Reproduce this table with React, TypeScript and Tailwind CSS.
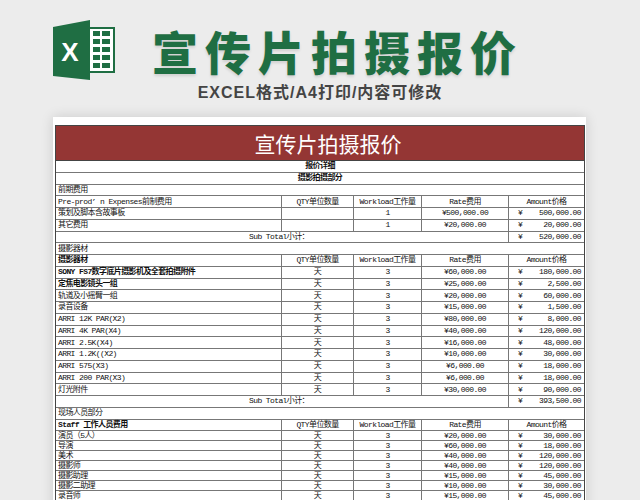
import React from "react";

type Row =
  | { t: "full"; text: string; bold?: boolean; center?: boolean }
  | { t: "head"; text: string; bold?: boolean }
  | { t: "data"; name: string; bold?: boolean; unit: string; qty: string; rate: string; amt: string; short?: boolean }
  | { t: "sub"; amt: string };

const rows: Row[] = [
  { t: "full", text: "报价详细", bold: true, center: true },
  { t: "full", text: "摄影拍摄部分", bold: true, center: true },
  { t: "full", text: "前期费用" },
  { t: "head", text: "Pre-prod’ n Expenses前制费用" },
  { t: "data", name: "策划及脚本含故事板", unit: "", qty: "1", rate: "¥500,000.00", amt: "500,000.00" },
  { t: "data", name: "其它费用", unit: "", qty: "1", rate: "¥20,000.00", amt: "20,000.00" },
  { t: "sub", amt: "520,000.00" },
  { t: "full", text: "摄影器材" },
  { t: "head", text: "摄影器材", bold: true },
  { t: "data", name: "SONY FS7数字底片摄影机及全套拍摄附件", bold: true, unit: "天", qty: "3", rate: "¥60,000.00", amt: "180,000.00" },
  { t: "data", name: "定焦电影镜头一组", bold: true, unit: "天", qty: "3", rate: "¥25,000.00", amt: "2,500.00" },
  { t: "data", name: "轨道及小摇臂一组", unit: "天", qty: "3", rate: "¥20,000.00", amt: "60,000.00" },
  { t: "data", name: "录音设备", unit: "天", qty: "3", rate: "¥15,000.00", amt: "1,500.00" },
  { t: "data", name: "ARRI 12K PAR(X2)", unit: "天", qty: "3", rate: "¥80,000.00", amt: "8,000.00" },
  { t: "data", name: "ARRI 4K PAR(X4)", unit: "天", qty: "3", rate: "¥40,000.00", amt: "120,000.00" },
  { t: "data", name: "ARRI 2.5K(X4)", unit: "天", qty: "3", rate: "¥16,000.00", amt: "48,000.00" },
  { t: "data", name: "ARRI 1.2K((X2)", unit: "天", qty: "3", rate: "¥10,000.00", amt: "30,000.00" },
  { t: "data", name: "ARRI 575(X3)", unit: "天", qty: "3", rate: "¥6,000.00", amt: "18,000.00" },
  { t: "data", name: "ARRI 200 PAR(X3)", unit: "天", qty: "3", rate: "¥6,000.00", amt: "18,000.00" },
  { t: "data", name: "灯光附件", unit: "天", qty: "3", rate: "¥30,000.00", amt: "90,000.00" },
  { t: "sub", amt: "393,500.00" },
  { t: "full", text: "现场人员部分" },
  { t: "head", text: "Staff 工作人员费用", bold: true },
  { t: "data", name: "演员（5人）", unit: "天", qty: "3", rate: "¥20,000.00", amt: "30,000.00", short: true },
  { t: "data", name: "导演", unit: "天", qty: "3", rate: "¥60,000.00", amt: "18,000.00", short: true },
  { t: "data", name: "美术", unit: "天", qty: "3", rate: "¥40,000.00", amt: "120,000.00", short: true },
  { t: "data", name: "摄影师", unit: "天", qty: "3", rate: "¥40,000.00", amt: "120,000.00", short: true },
  { t: "data", name: "摄影助理", unit: "天", qty: "3", rate: "¥15,000.00", amt: "45,000.00", short: true },
  { t: "data", name: "摄影二助理", unit: "天", qty: "3", rate: "¥10,000.00", amt: "30,000.00", short: true },
  { t: "data", name: "录音师", unit: "天", qty: "3", rate: "¥15,000.00", amt: "45,000.00", short: true },
];

const grid = "grid grid-cols-[225px_72px_68px_87px_76px] border-b border-[#777]";
const cell = "flex items-center justify-center border-l border-[#777]";

function ExcelLogo() {
  return (
    <svg width="62" height="60" viewBox="0 0 62 60">
      <rect x="34" y="8" width="27" height="44" fill="#fff" stroke="#1f6e43" strokeWidth="2" />
      {[11, 19, 27, 35, 43].map((y) => (
        <g key={y} fill="#1f6e43">
          <rect x="40" y={y} width="7" height="5" />
          <rect x="49" y={y} width="8" height="5" />
        </g>
      ))}
      <polygon points="0,7 37,0 37,60 0,56" fill="#1f6e43" />
      <text
        x="17"
        y="41"
        textAnchor="middle"
        fill="#fff"
        fontFamily="Liberation Sans, sans-serif"
        fontWeight="bold"
        fontSize="26"
      >
        X
      </text>
    </svg>
  );
}

function TableRow({ row }: { row: Row }) {
  if (row.t === "full") {
    return (
      <div
        className={`h-[11.75px] border-b border-[#777] flex items-center ${row.center ? "justify-center" : "pl-[2px]"} ${row.bold ? "font-bold" : ""}`}
      >
        {row.text}
      </div>
    );
  }
  if (row.t === "head") {
    return (
      <div className={`${grid} h-[11.75px]`}>
        <div className={`flex items-center pl-[2px] ${row.bold ? "font-bold" : ""}`}>{row.text}</div>
        <div className={cell}>QTY单位数量</div>
        <div className={cell}>Workload工作量</div>
        <div className={cell}>Rate费用</div>
        <div className={cell}>Amount价格</div>
      </div>
    );
  }
  if (row.t === "sub") {
    return (
      <div className="grid grid-cols-[452px_76px] h-[11.75px] border-b border-[#777]">
        <div className="flex items-center justify-center pr-[6px]">Sub Total小计：</div>
        <div className="flex items-center justify-between border-l border-[#777] pl-[9px] pr-[3px]">
          <span>¥</span>
          <span>{row.amt}</span>
        </div>
      </div>
    );
  }
  return (
    <div className={`${grid} ${row.short ? "h-[10px]" : "h-[11.75px]"}`}>
      <div className={`flex items-center pl-[2px] whitespace-nowrap ${row.bold ? "font-bold" : ""}`}>{row.name}</div>
      <div className={cell}>{row.unit}</div>
      <div className={cell}>{row.qty}</div>
      <div className={cell}>{row.rate}</div>
      <div className="flex items-center justify-between border-l border-[#777] pl-[9px] pr-[3px]">
        <span>¥</span>
        <span>{row.amt}</span>
      </div>
    </div>
  );
}

export default function App() {
  return (
    <div className="w-[640px] h-[500px] overflow-hidden bg-[#ececec] font-['Noto_Sans_CJK_SC',sans-serif]">
      <div className="flex items-center h-[60px] mt-[20px] pl-[53px]">
        <ExcelLogo />
        <h1 className="ml-[37px] text-[46px] leading-[60px] font-black tracking-[7px] text-[#1f6e43] [text-shadow:0_2px_3px_rgba(0,0,0,0.12)]">
          宣传片拍摄报价
        </h1>
      </div>
      <p className="mt-[5px] h-[16px] text-center text-[16px] leading-[16px] font-bold tracking-[1px] text-[#444] font-['Liberation_Sans','Noto_Sans_CJK_SC',sans-serif]">
        EXCEL格式/A4打印/内容可修改
      </p>
      <div className="ml-[53px] mt-[16px] w-[533px] h-[400px] bg-white pt-[8px] pl-[2px] shadow-[0_0_12px_rgba(0,0,0,0.14)]">
        <div className="w-[530px] border border-[#444] text-[8px] leading-none tracking-[-0.6px] text-[#111] font-['Liberation_Mono','Noto_Sans_CJK_SC',monospace]">
          <div className="h-[35px] bg-[#943634] border-b border-[#444] flex items-center justify-center pl-[16px] text-white text-[21px] tracking-normal font-['Noto_Sans_CJK_SC',sans-serif]">
            宣传片拍摄报价
          </div>
          {rows.map((r, i) => (
            <TableRow key={i} row={r} />
          ))}
        </div>
      </div>
    </div>
  );
}
